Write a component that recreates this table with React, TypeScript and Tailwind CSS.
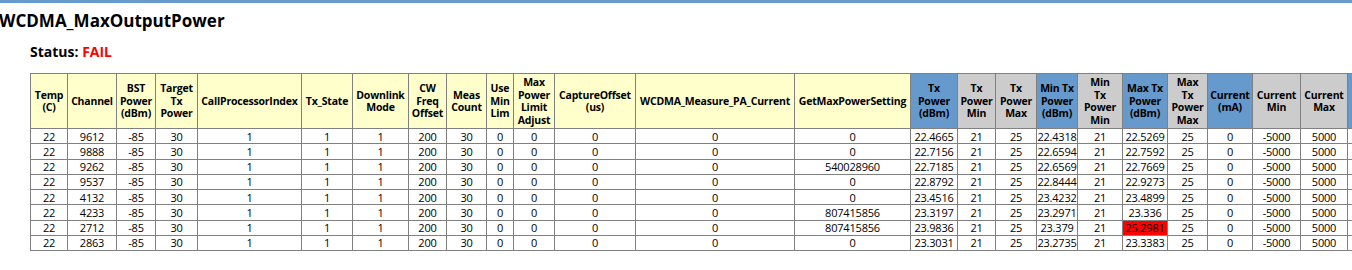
import React from "react"

type Kind = "y" | "b" | "g"

const headers: { lines: string[]; w: number; kind: Kind }[] = [
  { lines: ["Temp", "(C)"], w: 37, kind: "y" },
  { lines: ["Channel"], w: 49, kind: "y" },
  { lines: ["BST", "Power", "(dBm)"], w: 39, kind: "y" },
  { lines: ["Target", "Tx", "Power"], w: 42, kind: "y" },
  { lines: ["CallProcessorIndex"], w: 104, kind: "y" },
  { lines: ["Tx_State"], w: 51, kind: "y" },
  { lines: ["Downlink", "Mode"], w: 56, kind: "y" },
  { lines: ["CW", "Freq", "Offset"], w: 38, kind: "y" },
  { lines: ["Meas", "Count"], w: 40, kind: "y" },
  { lines: ["Use", "Min", "Lim"], w: 27, kind: "y" },
  { lines: ["Max", "Power", "Limit", "Adjust"], w: 41, kind: "y" },
  { lines: ["CaptureOffset", "(us)"], w: 81, kind: "y" },
  { lines: ["WCDMA_Measure_PA_Current"], w: 159, kind: "y" },
  { lines: ["GetMaxPowerSetting"], w: 116, kind: "y" },
  { lines: ["Tx", "Power", "(dBm)"], w: 47, kind: "b" },
  { lines: ["Tx", "Power", "Min"], w: 38, kind: "g" },
  { lines: ["Tx", "Power", "Max"], w: 41, kind: "g" },
  { lines: ["Min Tx", "Power", "(dBm)"], w: 41, kind: "b" },
  { lines: ["Min", "Tx", "Power", "Min"], w: 45, kind: "g" },
  { lines: ["Max Tx", "Power", "(dBm)"], w: 45, kind: "b" },
  { lines: ["Max", "Tx", "Power", "Max"], w: 40, kind: "g" },
  { lines: ["Current", "(mA)"], w: 45, kind: "b" },
  { lines: ["Current", "Min"], w: 48, kind: "g" },
  { lines: ["Current", "Max"], w: 47, kind: "g" },
  { lines: [], w: 60, kind: "b" },
]

// channel, max power setting, tx power, min tx, max tx, failed
const rows: [string, string, string, string, string, boolean][] = [
  ["9612", "0", "22.4665", "22.4318", "22.5269", false],
  ["9888", "0", "22.7156", "22.6594", "22.7592", false],
  ["9262", "540028960", "22.7185", "22.6569", "22.7669", false],
  ["9537", "0", "22.8792", "22.8444", "22.9273", false],
  ["4132", "0", "23.4516", "23.4232", "23.4899", false],
  ["4233", "807415856", "23.3197", "23.2971", "23.336", false],
  ["2712", "807415856", "23.9836", "23.379", "25.2981", true],
  ["2863", "0", "23.3031", "23.2735", "23.3383", false],
]

const headBg: Record<Kind, string> = {
  y: "bg-[#ffffcc]",
  b: "bg-[#6699cc]",
  g: "bg-[#cccccc]",
}

export default function App() {
  return (
    <div className="w-[1352px] h-[270px] overflow-hidden bg-white text-black" style={{ fontFamily: '"Open Sans", "Liberation Sans", sans-serif' }}>
      <div className="h-[3px] bg-[#6699cc]" />
      <h1 className="mt-[7px] -ml-[1px] text-[17px] leading-[22px] font-bold">WCDMA_MaxOutputPower</h1>
      <div className="mt-[11px] ml-[30px] text-[14px] leading-[18px] font-bold">
        Status: <span className="text-[#ff0000]">FAIL</span>
      </div>

      <table className="mt-[12px] ml-[30px] w-[1377px] table-fixed border-collapse text-[11px] tracking-[-0.2px]">
        <colgroup>
          {headers.map((h, i) => (
            <col key={i} style={{ width: h.w }} />
          ))}
        </colgroup>
        <thead>
          <tr className="h-[55px]">
            {headers.map((h, i) => (
              <th
                key={i}
                className={`${headBg[h.kind]} border border-[#808080] p-0 text-center align-middle font-bold leading-[12.5px] whitespace-nowrap text-[10.5px]`}
              >
                {h.lines.map((l, j) => (
                  <div key={j}>{l}</div>
                ))}
              </th>
            ))}
          </tr>
        </thead>
        <tbody>
          {rows.map((r, i) => {
            const cells = [
              "22", r[0], "-85", "30", "1", "1", "1", "200", "30", "0", "0", "0", "0", r[1],
              r[2], "21", "25", r[3], "21", r[4], "25", "0", "-5000", "5000", "",
            ]
            return (
              <tr key={i} className="h-[15.25px]">
                {cells.map((c, j) => (
                  <td
                    key={j}
                    className={`border border-[#808080] p-0 text-center leading-[13px] whitespace-nowrap ${
                      j === 19 && r[5] ? "bg-[#ff0000]" : ""
                    }`}
                  >
                    {c}
                  </td>
                ))}
              </tr>
            )
          })}
        </tbody>
      </table>
    </div>
  )
}
